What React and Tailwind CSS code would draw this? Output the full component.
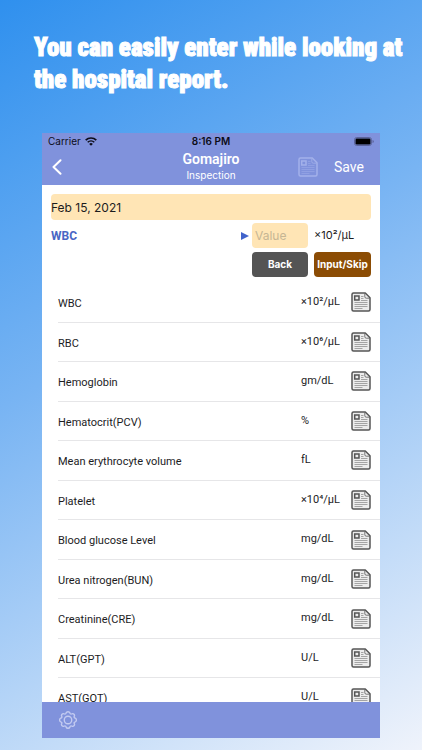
import React, { useState } from 'react';

const tests = [
  { name: 'WBC', unit: '×10²/μL' },
  { name: 'RBC', unit: '×10⁶/μL' },
  { name: 'Hemoglobin', unit: 'gm/dL' },
  { name: 'Hematocrit(PCV)', unit: '%' },
  { name: 'Mean erythrocyte volume', unit: 'fL' },
  { name: 'Platelet', unit: '×10⁴/μL' },
  { name: 'Blood glucose Level', unit: 'mg/dL' },
  { name: 'Urea nitrogen(BUN)', unit: 'mg/dL' },
  { name: 'Creatinine(CRE)', unit: 'mg/dL' },
  { name: 'ALT(GPT)', unit: 'U/L' },
  { name: 'AST(GOT)', unit: 'U/L' },
];

function ReportIcon({ className, fill = 'none' }) {
  return (
    <svg viewBox="0 0 20 20" fill="none" stroke="currentColor" className={className} aria-hidden="true">
      <path
        d="M2.5 1h11.8L19 5.7v11.8a1.5 1.5 0 0 1-1.5 1.5h-15A1.5 1.5 0 0 1 1 17.5v-15A1.5 1.5 0 0 1 2.5 1z"
        fill={fill}
        strokeWidth="1.5"
        strokeLinejoin="round"
      />
      <path d="M13.8 1.5v3.2a1.5 1.5 0 0 0 1.5 1.5h3.2" strokeWidth="0.8" />
      <rect x="3.7" y="4" width="4.3" height="4" strokeWidth="1.5" />
      <path
        d="M10 4.500h2.500M10 6.500h2.500M10 8.500h6.500M3.500 10.500h13M3.500 12.500h13M3.500 14.500h13M3.500 16.500h8"
        strokeWidth="0.8"
        opacity="0.6"
      />
    </svg>
  );
}

function WifiIcon() {
  return (
    <svg viewBox="0 0 12 9" className="w-3 h-[9px]" fill="none" stroke="#0c0c18" aria-hidden="true">
      <path d="M0.7 3.1a7.7 7.7 0 0 1 10.6 0" strokeWidth="1.7" />
      <path d="M2.7 5.2a4.8 4.8 0 0 1 6.6 0" strokeWidth="1.5" />
      <path d="M6 8.8L4.2 6.9a2.6 2.6 0 0 1 3.6 0z" fill="#0c0c18" stroke="none" />
    </svg>
  );
}

function BatteryIcon() {
  return (
    <svg viewBox="0 0 20 9" className="w-5 h-[9px]" aria-hidden="true">
      <rect x="0.5" y="0.5" width="17" height="8" rx="2.2" fill="none" stroke="#5c649b" />
      <rect x="1.5" y="1.5" width="15" height="6" rx="1.2" fill="#000" />
      <path d="M18.5 3v3q1.3-.3 1.3-1.5T18.5 3z" fill="#5c649b" />
    </svg>
  );
}

function GearIcon() {
  return (
    <svg viewBox="0 0 24 24" className="w-[18px] h-[18px]" fill="none" stroke="#c3cbf1" strokeWidth="1.8" strokeLinejoin="round" aria-hidden="true">
      <path d="M9.5 2.5c.8-2 4.200-2 5 0 .4 1.600 1.400 2 2.800 1.200 2-.8 4 1.200 3.200 3.200-.8 1.300-.3 2.200 1.200 2.600 2 .8 2 4.200 0 5-1.500.4-2 1.300-1.200 2.600.8 2-1.200 4-3.200 3.200-1.400-.8-2.400-.4-2.800 1.200-.8 2-4.200 2-5 0-.4-1.600-1.400-2-2.800-1.200-2 .8-4-1.200-3.200-3.200.8-1.300.3-2.200-1.200-2.600-2-.8-2-4.200 0-5 1.500-.4 2-1.300 1.200-2.600-.8-2 1.200-4 3.200-3.200 1.400.8 2.400.4 2.800-1.200z" />
      <circle cx="12" cy="12" r="5" />
    </svg>
  );
}

export default function App() {
  const [value, setValue] = useState('');
  const [date, setDate] = useState('Feb 15, 2021');

  return (
    <div className="min-h-screen bg-[linear-gradient(150deg,#2f90ee,#78b4f3_41%,#eff3fb)] pb-3 font-['Inter',sans-serif] text-[#1c1c1e]">
      <h1 className="h-[133px] pt-8 pl-[34px] font-['Liberation_Sans_Narrow','Roboto_Condensed','Open_Sans_Condensed',sans-serif] text-[25px] leading-8 font-black text-white whitespace-nowrap [-webkit-text-stroke:1px_white]">
        You can easily enter while looking at
        <br />
        the hospital report.
      </h1>

      <main className="mx-[42px] bg-white">
        <header className="bg-[#8092dc] text-white">
          <div className="grid grid-cols-3 items-center h-4 px-1.5 text-[10px] text-[#0c0c18]">
            <span className="flex items-center gap-1">
              Carrier <WifiIcon />
            </span>
            <span className="text-center font-semibold">8:16 PM</span>
            <span className="flex justify-end">
              <BatteryIcon />
            </span>
          </div>
          <div className="grid grid-cols-3 items-center h-9 px-1">
            <button aria-label="Go back" className="w-6 pl-1.5">
              <svg viewBox="0 0 10 16" className="w-2.5 h-4" fill="none" stroke="currentColor" strokeWidth="2" strokeLinecap="round" strokeLinejoin="round" aria-hidden="true">
                <path d="M8.500 1.200L1.500 8l7 6.800" />
              </svg>
            </button>
            <div className="text-center">
              <h2 className="font-['Roboto',sans-serif] text-sm leading-4 font-semibold">Gomajiro</h2>
              <p className="text-[10px] leading-4">Inspection</p>
            </div>
            <div className="flex items-center justify-end gap-4 pr-3">
              <button aria-label="Open report">
                <ReportIcon className="w-5 h-5 text-[#a3b1ea]" />
              </button>
              <button className="font-['Roboto',sans-serif] text-sm">Save</button>
            </div>
          </div>
        </header>

        <section className="h-[98px] px-[9px] pt-[9px]">
          <input
            aria-label="Date"
            value={date}
            onChange={(e) => setDate(e.target.value)}
            className="block w-full h-[26px] rounded bg-[#ffe5b5] text-xs"
          />
          <div className="flex items-center gap-1.5 mt-[3px]">
            <label htmlFor="value" className="flex-1 font-['Roboto',sans-serif] text-xs font-bold text-[#4a66c4]">WBC</label>
            <div className="flex items-center gap-[3px]">
              <svg viewBox="0 0 8 8" className="w-2 h-2" fill="#4163cb" aria-hidden="true">
                <path d="M0 0l8 4-8 4z" />
              </svg>
              <input
                id="value"
                placeholder="Value"
                value={value}
                onChange={(e) => setValue(e.target.value)}
                className="w-14 h-[25px] pl-[3px] rounded bg-[#ffe5b5] text-xs placeholder:text-[#c6b694]"
              />
            </div>
            <span className="w-[57px] text-[11px]">×10²/μL</span>
          </div>
          <div className="flex justify-end gap-1.5 mt-1 text-[10px] font-bold text-white">
            <button className="w-14 h-[25px] rounded bg-[#545454]">Back</button>
            <button className="w-[57px] h-[25px] rounded bg-[#8b4c04] whitespace-nowrap">Input/Skip</button>
          </div>
        </section>

        <div className="h-[419px] overflow-hidden">
          <ul className="grid grid-rows-11 h-[435px] pl-4 font-['Roboto',sans-serif] text-[11px]">
            {tests.map((t) => (
              <li key={t.name} className="flex items-center border-b border-[#e6e6e8] pr-[9px]">
                <span className="flex-1 pt-1">{t.name}</span>
                <span className="w-[50px]">{t.unit}</span>
                <button aria-label={`${t.name} report`}>
                  <ReportIcon className="w-5 h-5 text-[#555555]" fill="#ececec" />
                </button>
              </li>
            ))}
          </ul>
        </div>

        <footer className="flex items-center h-9 pl-[17px] bg-[#8092dc]">
          <button aria-label="Settings">
            <GearIcon />
          </button>
        </footer>
      </main>
    </div>
  );
}
